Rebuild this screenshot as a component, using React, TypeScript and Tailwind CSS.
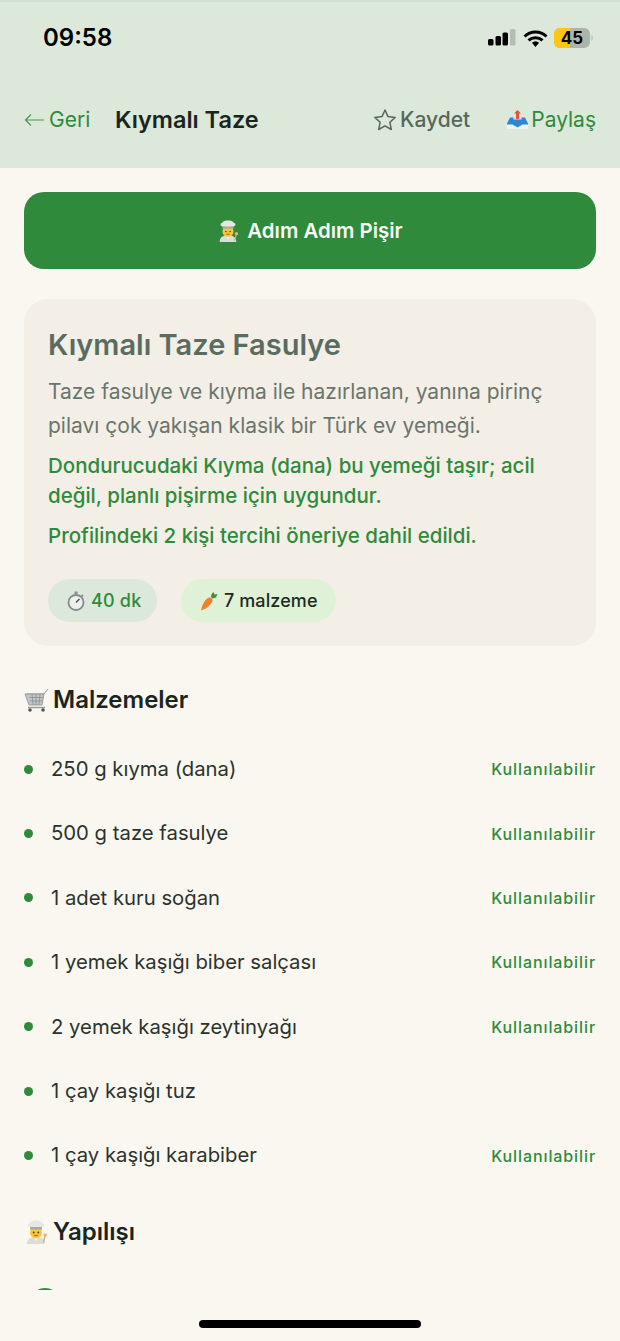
const font = { fontFamily: "Inter, 'Noto Sans', sans-serif" };

function ChefIcon({ size = 24 }: { size?: number }) {
  return (
    <svg width={size} height={size} viewBox="0 0 24 24" className="shrink-0">
      <path d="M3 24c0-5 3-7 9-7s9 2 9 7z" fill="#dcdcd8" />
      <path d="M9.500 17.500h5L12 21z" fill="#f5f5f2" />
      <circle cx="12" cy="12.500" r="6" fill="#f9c73a" />
      <path d="M6 9.500h12V7H6z" fill="#a9a9a4" />
      <path d="M6 7C3.500 6.500 3 3.600 5.800 3 6.800.8 9 .5 12 .5s5.200.3 6.200 2.500c2.800.6 2.300 3.500-.2 4z" fill="#e6e6e2" />
      <circle cx="9.700" cy="12.500" r=".9" fill="#5a3a1c" />
      <circle cx="14.300" cy="12.500" r=".9" fill="#5a3a1c" />
      <path d="M10.500 15.500h3" stroke="#c4502c" strokeWidth="1" strokeLinecap="round" />
      <path d="M19.500 22l1.500-6" stroke="#d9a066" strokeWidth="1.200" strokeLinecap="round" />
      <circle cx="21.200" cy="15" r="1.800" fill="#e6b47c" />
    </svg>
  );
}

function StatusBar() {
  return (
    <div className="flex h-[72px] items-center justify-between pl-[43px] pr-[27px]">
      <span className="text-[24px] font-semibold text-black">09:58</span>
      <div className="flex items-center">
        <svg width="28" height="18" viewBox="0 0 28 18">
          <rect x="0" y="10" width="5.500" height="6.500" rx="1.500" fill="#000" />
          <rect x="7.500" y="7" width="5.500" height="9.500" rx="1.500" fill="#000" />
          <rect x="14.500" y="3.500" width="5.500" height="13" rx="1.500" fill="#000" />
          <rect x="22" y="0" width="5.500" height="16.500" rx="1.500" fill="#b4beb2" />
        </svg>
        <svg width="25" height="19" viewBox="0 0 25 19" className="ml-[7px]">
          <path d="M12.500 18l-3.600-4.200a5.400 5.400 0 0 1 7.200 0z" fill="#000" />
          <path d="M1.500 7.500a16 16 0 0 1 22 0M5.500 11.300a10.500 10.500 0 0 1 14 0" fill="none" stroke="#000" strokeWidth="3" />
        </svg>
        <div className="relative ml-[6px] h-[20px] w-[36px] overflow-hidden rounded-[6px] bg-[#adb5ab]">
          <div className="h-full w-[16px] bg-[#fcc613]" />
          <span className="absolute inset-0 text-center text-[17px] leading-[20px] font-bold text-black">45</span>
        </div>
        <div className="ml-[1px] h-[6px] w-[2px] rounded-r-sm bg-[#c3cbc1]" />
      </div>
    </div>
  );
}

function Header() {
  return (
    <header className="h-[168px] shrink-0 border-t-2 border-[#cfe0cf] bg-[#dce8da]">
      <StatusBar />
      <div className="flex h-[92px] items-center pr-[24px] pl-[24px]">
        <span className="flex w-[91px] items-center text-[21px] text-[#2f8a3b]">
          <svg width="21" height="14" viewBox="0 0 21 14" className="mr-[4px]">
            <path d="M20 7H1.500M7 1.500L1.500 7 7 12.500" fill="none" stroke="#4a9655" strokeWidth="1.200" />
          </svg>
          Geri
        </span>
        <span className="text-[23.500px] font-semibold text-[#1a251d]">Kıymalı Taze</span>
        <span className="ml-auto flex items-center text-[21px] font-medium text-[#55685a]">
          <svg width="24" height="24" viewBox="0 0 24 24" className="mr-[3px]">
            <path d="M12 2l3 6.600 7.200.8-5.300 4.900 1.400 7.200-6.300-3.600-6.300 3.600 1.400-7.200-5.300-4.900 7.200-.8z" fill="none" stroke="#55685a" strokeWidth="1.500" strokeLinejoin="round" />
          </svg>
          Kaydet
        </span>
        <span className="ml-[37px] flex items-center text-[21px] text-[#2f8a3b]">
          <svg width="21" height="20" viewBox="0 0 21 20" className="mr-[3px]">
            <path d="M10.500 0l3.500 3.500h-2v5.500H9V3.500H7z" fill="#e8503f" />
            <path d="M3 7.500h3.500v2h8v-2H18l3 6v5H0v-5z" fill="#2f86d6" />
            <path d="M0 14.500h5.500l5 3 5-3H21V19H0z" fill="#eef2f5" />
          </svg>
          Paylaş
        </span>
      </div>
    </header>
  );
}

function Pill({ bg, children }: { bg: string; children: React.ReactNode }) {
  return <div className={`flex h-[43px] items-center rounded-full ${bg}`}>{children}</div>;
}

function Ingredient({ name, available = true }: { name: string; available?: boolean }) {
  return (
    <li className="flex h-[64.400px] items-center">
      <span className="size-[9px] shrink-0 rounded-full bg-[#2f8a3b]" />
      <span className="ml-[18px] text-[20.300px] text-[#2a332c]">{name}</span>
      {available && <span className="ml-auto text-[16px] font-medium tracking-[0.9px] text-[#2f8a3b]">Kullanılabilir</span>}
    </li>
  );
}

const ingredients = [
  { name: "250 g kıyma (dana)" },
  { name: "500 g taze fasulye" },
  { name: "1 adet kuru soğan" },
  { name: "1 yemek kaşığı biber salçası" },
  { name: "2 yemek kaşığı zeytinyağı" },
  { name: "1 çay kaşığı tuz", available: false },
  { name: "1 çay kaşığı karabiber" },
];

export default function App() {
  return (
    <div className="flex h-[1341px] w-[620px] flex-col overflow-hidden bg-[#faf7f1]" style={font}>
      <Header />

      <main className="h-[1122px] shrink-0 overflow-hidden px-[24px] pt-[24px]">
        <button className="flex h-[77px] w-full items-center justify-center gap-[8px] rounded-[20px] bg-[#2f8a3b] pt-[1px] text-[20.400px] font-semibold text-[#f6fbf4]">
          <ChefIcon size={22} />
          Adım Adım Pişir
        </button>

        {/* Recipe card */}
        <section className="mt-[30px] h-[347px] rounded-[24px] bg-[#f3efe6] px-[24px] pt-[25px]">
          <h1 className="text-[29px] leading-[42px] font-semibold text-[#5a6b60]">Kıymalı Taze Fasulye</h1>
          <p className="mt-[9px] text-[21px] leading-[34px] text-[#6b756d]">
            Taze fasulye ve kıyma ile hazırlanan, yanına pirinç pilavı çok yakışan klasik bir Türk ev yemeği.
          </p>
          <p className="mt-[8px] text-[20.500px] leading-[30px] font-medium text-[#2f8a3b]">
            Dondurucudaki Kıyma (dana) bu yemeği taşır; acil değil, planlı pişirme için uygundur.
          </p>
          <p className="mt-[10px] text-[20.500px] leading-[30px] font-medium text-[#2f8a3b]">
            Profilindeki 2 kişi tercihi öneriye dahil edildi.
          </p>
          <div className="mt-[28px] flex gap-[24px]">
            <Pill bg="bg-[#dce8da] w-[109px] pl-[19px]">
              <svg width="18" height="20" viewBox="0 0 18 20" className="mr-[6px]">
                <rect x="7.500" y="0.500" width="3" height="2.500" fill="#8a8f90" />
                <circle cx="9" cy="11.500" r="7.500" fill="#eef0f0" stroke="#858b8c" strokeWidth="1.800" />
                <path d="M9 11.500l3.500-3.500" stroke="#444" strokeWidth="1.200" />
                <path d="M14.500 4l1.500 1.500" stroke="#858b8c" strokeWidth="1.800" />
              </svg>
              <span className="text-[18px] font-medium tracking-[0.2px] text-[#2f8a3b]">40 dk</span>
            </Pill>
            <Pill bg="bg-[#dff2d8] w-[155px] pl-[19px]">
              <svg width="18" height="20" viewBox="0 0 18 20" className="mr-[6px]">
                <path d="M1 19.500C2 14 5 8 9 6.500c2-.5 4 1.500 3.500 3.500C11 14 6 18 1 19.500z" fill="#f2802a" />
                <path d="M11 6c0-2 1-4 2.500-5l1 2.500L17.500 3 16 6.500l-3.500 1z" fill="#3f8f3a" />
              </svg>
              <span className="text-[18px] font-medium tracking-[0.1px] text-[#1d2a20]">7 malzeme</span>
            </Pill>
          </div>
        </section>

        <h2 className="mt-[37px] flex h-[34px] items-center text-[24px] font-semibold text-[#1a251d]">
          <svg width="26" height="24" viewBox="0 0 26 24" className="mr-[4px] -ml-[1px]">
            <path d="M3 6h18l4-5" fill="none" stroke="#9a9d9f" strokeWidth="1" />
            <path d="M2 6h19l-2 11H6z" fill="#c3c6c8" stroke="#8b8e90" strokeWidth=".8" />
            <path d="M6 9.500h14M6.500 13h13M9 6l1 11M13 6v11M17 6l-1 11" stroke="#85888a" strokeWidth=".7" />
            <path d="M5 19.500h17" stroke="#9a9d9f" strokeWidth="1.500" />
            <circle cx="7" cy="22" r="1.800" fill="#555" />
            <circle cx="20" cy="22" r="1.800" fill="#555" />
          </svg>
          Malzemeler
        </h2>

        <ul className="mt-[20px]">
          {ingredients.map((item) => (
            <Ingredient key={item.name} name={item.name} available={item.available} />
          ))}
        </ul>

        <h2 className="mt-[27px] flex h-[34px] items-center text-[24px] font-semibold text-[#1a251d]">
          <ChefIcon size={24} />
          <span className="ml-[5px]">Yapılışı</span>
        </h2>

        <div className="mt-[39px] ml-[5px] size-[32px] rounded-full bg-[#2f8a3b]" />
      </main>

      <footer className="relative flex-1">
        <div className="absolute top-[30px] left-[199px] h-[8px] w-[222px] rounded-full bg-black" />
      </footer>
    </div>
  );
}
